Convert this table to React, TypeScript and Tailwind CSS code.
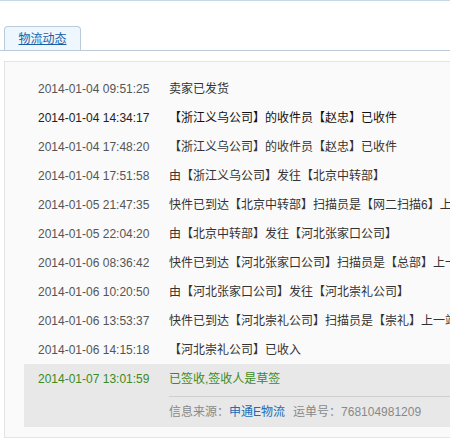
const rows = [
  { time: "2014-01-04 09:51:25", text: "卖家已发货" },
  { time: "2014-01-04 14:34:17", text: "【浙江义乌公司】的收件员【赵忠】已收件", strong: true },
  { time: "2014-01-04 17:48:20", text: "【浙江义乌公司】的收件员【赵忠】已收件" },
  { time: "2014-01-04 17:51:58", text: "由【浙江义乌公司】发往【北京中转部】" },
  { time: "2014-01-05 21:47:35", text: "快件已到达【北京中转部】扫描员是【网二扫描6】上一站是【】" },
  { time: "2014-01-05 22:04:20", text: "由【北京中转部】发往【河北张家口公司】" },
  { time: "2014-01-06 08:36:42", text: "快件已到达【河北张家口公司】扫描员是【总部】上一站是【】" },
  { time: "2014-01-06 10:20:50", text: "由【河北张家口公司】发往【河北崇礼公司】" },
  { time: "2014-01-06 13:53:37", text: "快件已到达【河北崇礼公司】扫描员是【崇礼】上一站是【】" },
  { time: "2014-01-06 14:15:18", text: "【河北崇礼公司】已收入" },
];

export default function App() {
  return (
    <div
      className="w-[450px] h-[440px] overflow-hidden bg-white border-t border-[#c9d8e8] text-[12px]"
      style={{ fontFamily: '"Liberation Sans", "Noto Sans CJK SC", sans-serif' }}
    >
      {/* Tabs */}
      <div className="pt-[25px] pl-[4px] border-b border-[#bccbdb] flex">
        <div className="w-[77px] h-[24px] border border-b-0 border-[#bccbdb] rounded-t-[4px] bg-[#eef6fe] flex items-center justify-center">
          <a className="text-[#1a5fa8] underline text-[12px] leading-none">物流动态</a>
        </div>
      </div>

      {/* Trace box */}
      <div className="mt-[10px] ml-[4px] w-[460px] h-[377px] border border-[#e4e4e4] bg-[#fafafa] pt-[12px] pl-[19px]">
        {rows.map((r) => (
          <div key={r.time} className="flex h-[29px] items-center pl-[14px] whitespace-nowrap">
            <span className={`w-[131px] shrink-0 ${r.strong ? "text-[#222]" : "text-[#555]"}`}>{r.time}</span>
            <span className={r.strong ? "text-[#111]" : "text-[#333]"}>{r.text}</span>
          </div>
        ))}

        <div className="bg-[#e8e8e8] pb-[1px]">
          <div className="flex h-[29px] items-center pl-[14px] whitespace-nowrap text-[#3d8a22]">
            <span className="w-[131px] shrink-0">2014-01-07 13:01:59</span>
            <span>已签收,签收人是草签</span>
          </div>
          <div className="ml-[145px] mt-[3px] border-t border-[#cfcfcf] h-[30px] flex items-center whitespace-nowrap text-[#888]">
            <span>信息来源：</span>
            <a className="text-[#1a6db5] ml-[0px]">申通E物流</a>
            <span className="ml-[8px]">运单号：</span>
            <span>768104981209</span>
          </div>
        </div>
      </div>
    </div>
  );
}
